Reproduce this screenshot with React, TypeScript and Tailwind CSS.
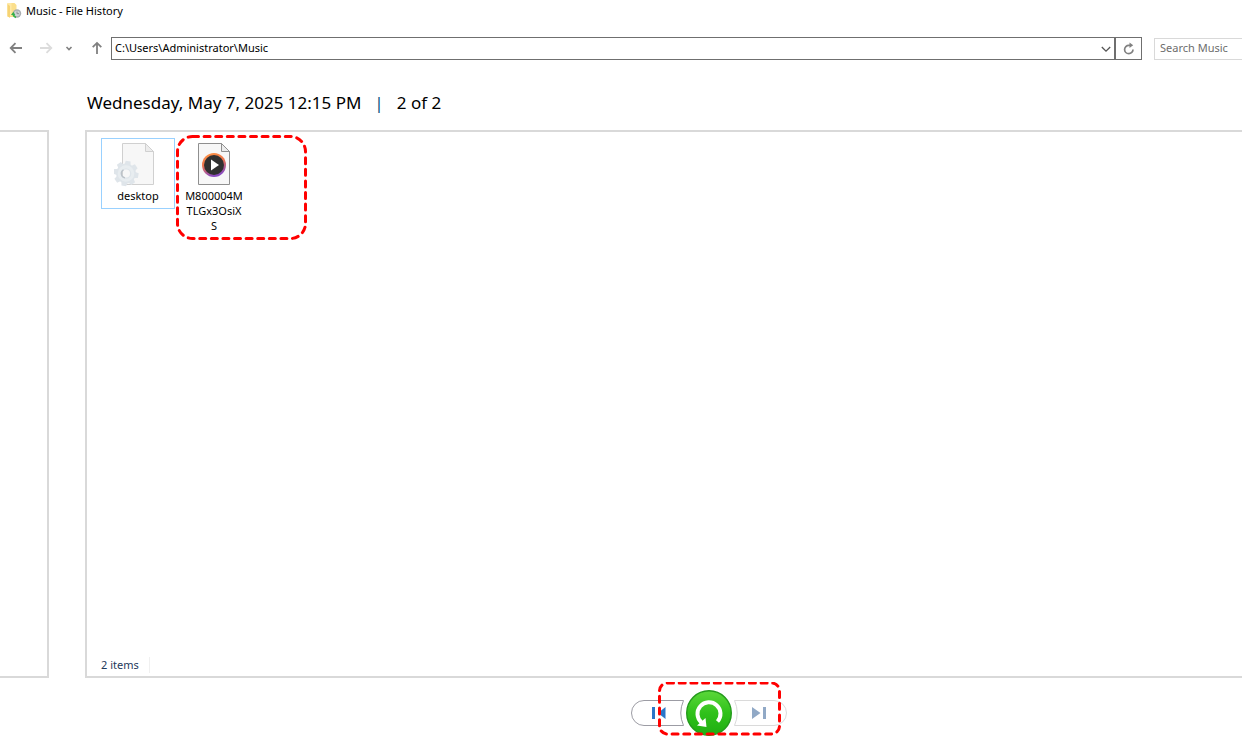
import type { ReactNode } from "react";

interface FileItemProps {
  lines: string[];
  icon: ReactNode;
  selected?: boolean;
}

function FolderIcon() {
  return (
    <svg width="16" height="16" viewBox="0 0 16 16" aria-hidden="true">
      <path d="M1.500 0h7l2 2v12h-9z" fill="#fbdf8c" />
      <path d="M1.500 0h4v13h-4z" fill="#ffe9a6" />
      <path d="M1.500 13V1l2.500 2v12z" fill="#f6d374" />
      <circle cx="11" cy="10.500" r="4.200" fill="#a9aeb1" />
      <circle cx="11" cy="10.500" r="2.800" fill="#ced3d5" />
      <path d="M11 8.500v2.200h2" stroke="#888e91" fill="none" />
      <path d="M7.200 11.500A4 4 0 0 0 10 14.300" stroke="#35b04a" strokeWidth="1.800" fill="none" />
      <path d="M5 12 7.300 8.700l2 3.300z" fill="#35b04a" />
    </svg>
  );
}

function PagePaths({ stroke }: { stroke: string }) {
  return (
    <>
      <path d="M8.500 .5H31.500l8 8V41.500H8.500z" fill="#f7f7f7" stroke={stroke} />
      <path d="M31.500 .5v8h8z" fill="#ececec" stroke={stroke} strokeLinejoin="round" />
    </>
  );
}

const TEETH = [0, 45, 90, 135, 180, 225, 270, 315];

function SettingsFileIcon() {
  return (
    <svg width="48" height="45" viewBox="0 0 48 45" aria-hidden="true">
      <PagePaths stroke="#d0d0d0" />
      <g transform="translate(12 30.500)">
        {TEETH.map((a) => (
          <path key={a} d="M-3.200 -8 -2.400 -12.500H2.400L3.200 -8z" fill="#dfe5ea" transform={`rotate(${a + 10})`} />
        ))}
        <circle r="7" fill="none" stroke="#dfe5ea" strokeWidth="6" />
        <circle r="6.800" fill="none" stroke="#e8edf0" strokeWidth="3" />
        <path d="M-2.500 -3.600A4.300 4.300 0 0 0 -1 4.400" fill="none" stroke="#bcc3c9" strokeWidth="1.300" />
      </g>
    </svg>
  );
}

function MediaFileIcon() {
  return (
    <svg width="48" height="45" viewBox="0 0 48 45" aria-hidden="true">
      <defs>
        <linearGradient id="ring" x1="0" y1="0" x2=".3" y2="1">
          <stop offset="0" stopColor="#ff9640" />
          <stop offset=".5" stopColor="#ec7450" />
          <stop offset="1" stopColor="#8a4bc0" />
        </linearGradient>
      </defs>
      <PagePaths stroke="#8f8f8f" />
      <circle cx="24" cy="22" r="12" fill="url(#ring)" />
      <circle cx="24" cy="22" r="10" fill="#303030" />
      <path d="M21 16.500v11l8-5.500z" fill="#fff" />
    </svg>
  );
}

function FileItem({ lines, icon, selected }: FileItemProps) {
  return (
    <li>
      <button
        className={`flex w-[74px] flex-col items-center border pt-1 pb-[5px] ${
          selected ? "border-[#99d1ff]" : "border-transparent"
        }`}
      >
        {icon}
        <span className="text-[11px] leading-[15px] text-black">
          {lines.map((line) => (
            <span key={line} className="block">{line}</span>
          ))}
        </span>
      </button>
    </li>
  );
}

function TitleBar() {
  return (
    <header className="flex h-[22px] items-center gap-1 pl-[6px]">
      <FolderIcon />
      <h1 className="text-[11px] leading-4">Music - File History</h1>
    </header>
  );
}

function NavBar() {
  return (
    <nav className="mt-[15px] flex h-[23px] items-center">
      <div className="flex h-full items-center pb-[2px]">
        <button aria-label="Back" className="ml-2">
          <svg width="16" height="16" viewBox="0 0 16 16" fill="none" stroke="#808080" strokeWidth="1.800">
            <path d="M14 8H3M7.500 3.200 2.700 8l4.800 4.800" />
          </svg>
        </button>
        <button aria-label="Forward" className="ml-[14px]" disabled>
          <svg width="16" height="16" viewBox="0 0 16 16" fill="none" stroke="#dcdcdc" strokeWidth="1.800">
            <path d="M2 8h11M8.500 3.200 13.300 8l-4.800 4.800" />
          </svg>
        </button>
        <button aria-label="Recent locations" className="ml-[11px]">
          <svg width="8" height="8" viewBox="0 0 8 8" fill="none" stroke="#808080" strokeWidth="1.600">
            <path d="M1.500 3 4 5.500 6.500 3" />
          </svg>
        </button>
        <button aria-label="Up" className="ml-4">
          <svg width="16" height="16" viewBox="0 0 16 16" fill="none" stroke="#808080" strokeWidth="1.800">
            <path d="M8 14V3M3.700 7.200 8 2.900l4.300 4.300" />
          </svg>
        </button>
      </div>
      <div className="ml-[6px] flex h-full flex-1 items-center border border-[#6f6f6f]">
        <input
          aria-label="Address"
          defaultValue="C:\Users\Administrator\Music"
          className="h-full min-w-0 flex-1 pr-1 pb-[2px] pl-[3px] text-[11px] text-black outline-none"
        />
        <button aria-label="Previous locations" className="px-[3px]">
          <svg width="10" height="8" viewBox="0 0 10 8" fill="none" stroke="#555" strokeWidth="1.300">
            <path d="M.8 2 5 6.200 9.200 2" />
          </svg>
        </button>
      </div>
      <button
        aria-label="Refresh"
        className="flex h-full w-[27px] items-center justify-center border border-[#6f6f6f]"
      >
        <svg width="14" height="14" viewBox="0 0 14 14" fill="none" stroke="#808080" strokeWidth="1.700">
          <path d="M8.500 3.300H6.800A4.200 4.200 0 1 0 11 7.500" />
          <path d="M7.500 .5v5.600l3.700-2.800z" fill="#808080" stroke="none" />
        </svg>
      </button>
      <input
        type="search"
        aria-label="Search Music"
        placeholder="Search Music"
        className="ml-3 h-[22px] w-[88px] border border-r-0 border-[#d9d9d9] pb-[2px] pl-[5px] text-[11px] outline-none placeholder:text-[#6d6d6d]"
      />
    </nav>
  );
}

function Controls() {
  return (
    <footer className="flex h-16 items-start justify-center pt-3 pl-[176px]">
      <div className="relative flex h-[46px] items-center gap-[2px]">
        <button aria-label="Previous version">
          <svg width="53" height="26" viewBox="0 0 53 26">
            <path d="M52.500 .5H13a12.500 12.500 0 0 0 0 25H52.500Q47 13 52.500 .5z" fill="#fff" stroke="#9c9ca4" />
            <path d="M21 7h3v12h-3zM34.500 7v12L27 13z" fill="#2a76c9" />
          </svg>
        </button>
        <button aria-label="Restore">
          <svg width="46" height="46" viewBox="0 0 46 46">
            <defs>
              <linearGradient id="green" x1="0" y1="0" x2="0" y2="1">
                <stop offset="0" stopColor="#5bd83a" />
                <stop offset=".5" stopColor="#30c11b" />
                <stop offset="1" stopColor="#1fae12" />
              </linearGradient>
            </defs>
            <circle cx="23" cy="23" r="22.300" fill="url(#green)" stroke="#239a1b" strokeWidth="1.400" />
            <path d="M15.500 32.500A11.500 11.500 0 1 1 31.500 31.500" fill="none" stroke="#fff" strokeWidth="4" />
            <path d="M11 35.500 20.500 37 19.500 28z" fill="#fff" />
          </svg>
        </button>
        <button aria-label="Next version" disabled>
          <svg width="53" height="26" viewBox="0 0 53 26">
            <path d="M.5 .5H40a12.500 12.500 0 0 1 0 25H.5Q6 13 .5 .5z" fill="#fff" stroke="#dadada" />
            <path d="M18 7v12l8.500-6zM29 7h3v12h-3z" fill="#91a9c6" />
          </svg>
        </button>
        <svg
          className="pointer-events-none absolute -top-2 left-[27px]"
          width="123"
          height="54"
          viewBox="0 0 123 54"
          fill="none"
          aria-hidden="true"
        >
          <rect x="1.500" y="1" width="120" height="51" rx="8" stroke="#f00" strokeWidth="3" strokeLinecap="round" strokeDasharray="6 5.700" />
        </svg>
      </div>
    </footer>
  );
}

export default function App() {
  return (
    <div className="flex min-h-screen flex-col overflow-hidden bg-white font-['Noto_Sans','Open_Sans',sans-serif] text-black">
      <TitleBar />
      <NavBar />

      <h2 className="mt-[30px] mb-[14px] flex pl-[87px] text-[17px] leading-[26px]">
        <span>Wednesday, May 7, 2025 12:15 PM</span>
        <span className="mx-[13px] text-[#0b4f7d]">|</span>
        <span>2 of 2</span>
      </h2>

      <main className="flex flex-1 gap-9">
        <aside className="w-[49px] border-2 border-l-0 border-[#d9d9d9]" />
        <section className="flex flex-1 flex-col border-2 border-r-0 border-[#d9d9d9]">
          <ul className="relative flex items-start gap-[2px] pt-[6px] pl-[14px]">
            <FileItem lines={["desktop"]} icon={<SettingsFileIcon />} selected />
            <FileItem lines={["M800004M", "TLGx3OsiX", "S"]} icon={<MediaFileIcon />} />
            <svg
              className="pointer-events-none absolute top-[3px] left-[89px]"
              width="131"
              height="105"
              viewBox="0 0 131 105"
              fill="none"
              aria-hidden="true"
            >
              <rect x="1.500" y="1.500" width="128" height="102" rx="15" stroke="#f00" strokeWidth="3" strokeLinecap="round" strokeDasharray="6 5.600" />
            </svg>
          </ul>
          <p className="mt-auto mb-[3px] ml-[14px] flex text-[11px] leading-4 text-[#1e395b]">
            <span className="border-r border-[#f0f0f0] pr-[10px]">2 items</span>
          </p>
        </section>
      </main>

      <Controls />
    </div>
  );
}
